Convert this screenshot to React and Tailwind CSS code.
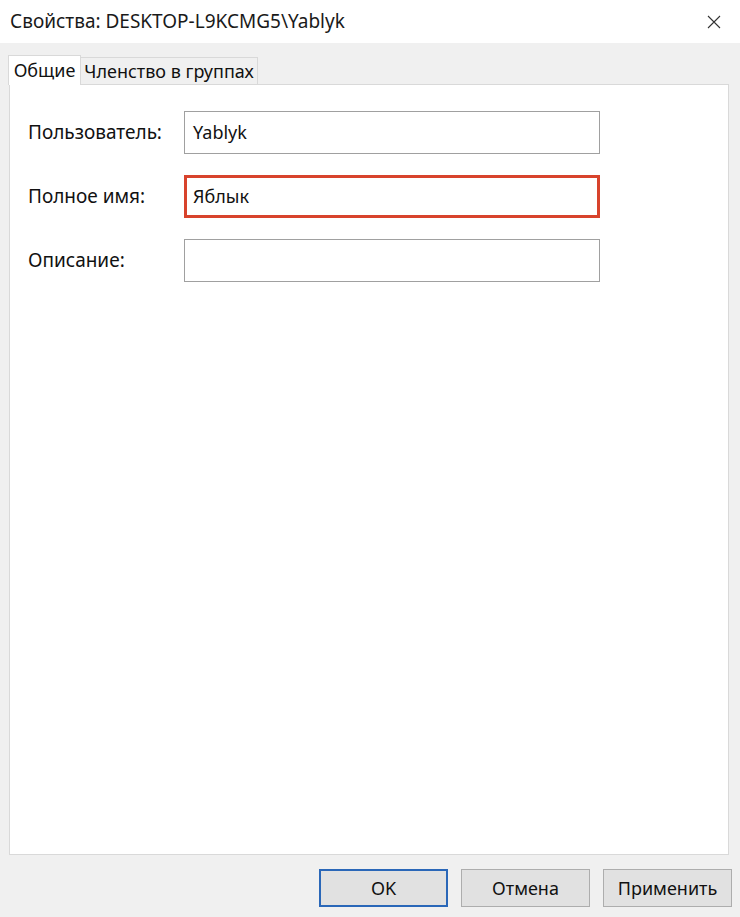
import React from 'react';

const fields = [
  { label: 'Пользователь:', value: 'Yablyk' },
  { label: 'Полное имя:', value: 'Яблык', highlight: true },
  { label: 'Описание:', value: '' },
];

const buttons = [
  { label: 'OK', primary: true },
  { label: 'Отмена' },
  { label: 'Применить' },
];

const App = () => {
  return (
    <div className="w-[740px] h-[917px] bg-[#f0f0f0] flex flex-col text-[#111] font-['Noto_Sans','Open_Sans',sans-serif]">
      {/* title bar */}
      <div className="h-[43px] bg-white flex items-center justify-between pl-[10px] pr-[19px] shrink-0">
        <span className="text-[19px] leading-none text-[#1a1a1a]">Свойства: DESKTOP-L9KCMG5\Yablyk</span>
        <svg width="14" height="14" viewBox="0 0 14 14" className="text-[#333]">
          <path d="M1 1 L13 13 M13 1 L1 13" stroke="currentColor" strokeWidth="1.1" fill="none" />
        </svg>
      </div>

      {/* tabs */}
      <div className="flex items-end pl-[8px] mt-[12px] h-[30px] relative z-10">
        <div className="h-[30px] w-[73px] bg-white border border-b-0 border-[#d9d9d9] flex items-center justify-center text-[18px]">
          Общие
        </div>
        <div className="h-[27px] w-[177px] bg-[#f0f0f0] border border-l-0 border-[#d9d9d9] border-b-0 flex items-center justify-center text-[18px] mb-[1px] whitespace-nowrap">
          Членство в группах
        </div>
      </div>

      {/* panel */}
      <div className="ml-[9px] w-[720px] h-[771px] -mt-[1px] bg-white border border-[#d9d9d9] pt-[26px] pl-[18px]">
        <div className="flex flex-col gap-[21px]">
          {fields.map((f) => (
            <div key={f.label} className="flex items-center">
              <div className="w-[156px] text-[19px] whitespace-nowrap">{f.label}</div>
              <div
                className={
                  f.highlight
                    ? 'w-[416px] h-[43px] border-[3px] border-[#d8432c] flex items-center pl-[6px] text-[18px]'
                    : 'w-[416px] h-[43px] border border-[#a0a0a0] flex items-center pl-[8px] text-[18px]'
                }
              >
                {f.value}
              </div>
            </div>
          ))}
        </div>
      </div>

      {/* buttons */}
      <div className="flex justify-end gap-[13px] pr-[8px] mt-[14px]">
        {buttons.map((b) => (
          <div
            key={b.label}
            className={
              b.primary
                ? 'w-[129px] h-[38px] bg-[#e1e1e1] border-2 border-[#2a67b8] flex items-center justify-center text-[18px]'
                : 'w-[129px] h-[38px] bg-[#e1e1e1] border border-[#adadad] flex items-center justify-center text-[18px]'
            }
          >
            {b.label}
          </div>
        ))}
      </div>
    </div>
  );
};

export default App;
